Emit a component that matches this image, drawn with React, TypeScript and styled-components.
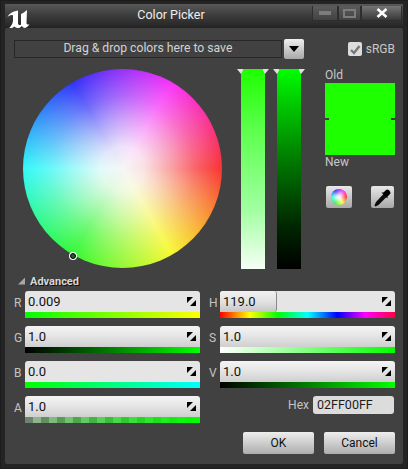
import React from 'react';
import styled, { createGlobalStyle } from 'styled-components';

const GlobalStyle = createGlobalStyle`
  html, body {
    margin: 0;
    padding: 0;
    background: #262626;
  }
  * {
    box-sizing: border-box;
  }
`;

const FONT = `"Roboto", "Liberation Sans", sans-serif`;

const WHEEL_FILL = `
  radial-gradient(
    circle closest-side,
    #f6f6f6 0%,
    rgba(250, 250, 250, 0.9) 22%,
    rgba(250, 250, 250, 0.66) 48%,
    rgba(250, 250, 250, 0.42) 72%,
    rgba(250, 250, 250, 0.2) 100%
  ),
  conic-gradient(from 90deg, #f80000, #f8f800, #00f800, #00f8f8, #0000f8, #f800f8, #f80000)
`;

const Window = styled.div`
  width: 408px;
  height: 469px;
  display: flex;
  flex-direction: column;
  background: #242424;
  border: 1px solid #1c1c1c;
  font-family: ${FONT};
  color: #d6d6d6;
  overflow: hidden;
`;

const TitleBar = styled.div`
  height: 24px;
  flex: none;
  display: flex;
  margin: 3px 4px 0 4px;
  padding: 2px 1px 0 2px;
  background: linear-gradient(#585858, #3e3e3e 45%, #232323);
`;

const Title = styled.div`
  flex: 1;
  padding-top: 1px;
  text-align: center;
  font-size: 12.5px;
  line-height: 16px;
  color: #eeeeee;
`;

const WindowButtons = styled.div`
  display: flex;
  align-items: flex-start;
`;

const WindowButton = styled.div<{ $w: number; $bright?: boolean }>`
  width: ${(p) => p.$w}px;
  height: 15px;
  display: flex;
  align-items: center;
  justify-content: center;
  border: 1px solid #2e2e2e;
  border-top: none;
  border-radius: 0 0 2px 2px;
  background: ${(p) =>
    p.$bright
      ? 'linear-gradient(#757575, #383838)'
      : 'linear-gradient(#5c5c5c, #424242)'};
`;

const Panel = styled.div`
  flex: 1;
  margin: 0 4px 4px 4px;
  background: #414141;
  border-radius: 2px;
  padding: 12px 8px 0 8px;
  display: flex;
  flex-direction: column;
`;

const SaveRow = styled.div`
  display: flex;
  align-items: center;
  height: 18px;
`;

const DropZone = styled.div`
  width: 268px;
  height: 18px;
  margin-left: 1px;
  border: 1px solid #272727;
  text-align: center;
  font-size: 12.2px;
  line-height: 15px;
  color: #d2d2d2;
`;

const DropButton = styled.div`
  width: 20px;
  height: 20px;
  margin-left: 2px;
  display: flex;
  align-items: center;
  justify-content: center;
  border-radius: 2px;
  background: linear-gradient(#f0f0f0, #a8a8a8);
`;

const Check = styled.div`
  width: 14px;
  height: 14px;
  margin-left: 44px;
  display: flex;
  align-items: center;
  justify-content: center;
  border-radius: 2px;
  background: #dddddd;
`;

const CheckLabel = styled.span`
  margin-left: 4px;
  font-size: 12px;
  color: #c8c8c8;
`;

const PickerRow = styled.div`
  display: flex;
  margin-top: 11px;
  height: 200px;
`;

const Wheel = styled.div`
  position: relative;
  width: 199px;
  height: 199px;
  margin-left: 10px;
  flex: none;
  border-radius: 50%;
  background: ${WHEEL_FILL};
`;

const WheelMarker = styled.div`
  position: absolute;
  left: 47px;
  top: 184px;
  width: 6px;
  height: 6px;
  border-radius: 50%;
  background: #1a5f2a;
  border: 1px solid #000000;
  box-shadow: 0 0 0 1px #ffffff;
`;

const Strips = styled.div`
  display: flex;
  gap: 12px;
  margin-left: 19px;
  flex: none;
`;

const Strip = styled.div<{ $fill: string }>`
  position: relative;
  width: 24px;
  height: 200px;
  background: ${(p) => p.$fill};
  &::before,
  &::after {
    content: '';
    position: absolute;
    top: 0;
    width: 6px;
    height: 5px;
    background: #e0e0e0;
  }
  &::before {
    left: -4px;
    clip-path: polygon(0 0, 100% 0, 100% 30%, 66% 100%);
  }
  &::after {
    right: -4px;
    clip-path: polygon(0 0, 100% 0, 33% 100%, 0 30%);
  }
`;

const Preview = styled.div`
  margin-left: 24px;
  width: 72px;
  display: flex;
  flex-direction: column;
  font-size: 12px;
  color: #c8c8c8;
`;

const PreviewLabel = styled.div`
  line-height: 14px;
`;

const OldLabel = styled(PreviewLabel)`
  margin: -1px 0 1px;
`;

const Swatch = styled.div`
  position: relative;
  width: 70px;
  height: 72px;
  background: #1eff00;
  &::before,
  &::after {
    content: '';
    position: absolute;
    top: 35px;
    width: 4px;
    height: 2px;
    background: #3d3d3d;
  }
  &::before {
    left: 0;
  }
  &::after {
    right: 0;
  }
`;

const ToolRow = styled.div`
  display: flex;
  gap: 19px;
  margin-top: 17px;
  margin-left: 1px;
`;

const ToolButton = styled.div<{ $w: number }>`
  width: ${(p) => p.$w}px;
  height: 22px;
  flex: none;
  display: flex;
  align-items: center;
  justify-content: center;
  border-radius: 2px;
  background: linear-gradient(#e8e8e8, #a8a8a8);
`;

const MiniWheel = styled.div`
  width: 16px;
  height: 16px;
  border-radius: 50%;
  background: ${WHEEL_FILL};
`;

const AdvancedHeader = styled.div`
  display: flex;
  align-items: center;
  gap: 5px;
  margin-top: 5px;
  margin-left: 5px;
  height: 14px;
  font-size: 11px;
  font-weight: 700;
  color: #d8d8d8;
  text-shadow: 1px 1px 0 #111111;
`;

const Triangle = styled.div`
  width: 7px;
  height: 7px;
  background: #a8a8a8;
  clip-path: polygon(100% 0, 100% 100%, 0 100%);
`;

const SliderGrid = styled.div`
  display: grid;
  grid-template-columns: 187px 187px;
  column-gap: 8px;
  margin-top: 3px;
`;

const SliderColumn = styled.div`
  display: flex;
  flex-direction: column;
  gap: 8px;
`;

const SliderRow = styled.div`
  display: flex;
  height: 27px;
`;

const AxisLabel = styled.div`
  width: 12px;
  flex: none;
  padding-left: 1px;
  font-size: 12px;
  line-height: 24px;
  color: #c4c4c4;
`;

const SliderBody = styled.div`
  flex: 1;
  display: flex;
  flex-direction: column;
`;

const NumberField = styled.div<{ $flat?: boolean }>`
  position: relative;
  height: 21px;
  padding-left: 3px;
  font-size: 13px;
  line-height: 21px;
  color: #111111;
  border-radius: 3px 3px 0 0;
  background: ${(p) =>
    p.$flat ? '#e5e5e5' : 'linear-gradient(#f4f4f4, #e6e6e6 45%, #cfcfcf)'};
  overflow: hidden;
`;

const HueFill = styled.div<{ $w: number }>`
  position: absolute;
  left: 0;
  top: 0;
  bottom: 0;
  width: ${(p) => p.$w}px;
  background: linear-gradient(#f2f2f2, #e2e2e2 50%, #c6c6c6);
  border-right: 1px solid #8a8a8a;
  border-radius: 0 3px 3px 0;
`;

const FieldText = styled.span`
  position: relative;
`;

const Grip = styled.svg`
  position: absolute;
  right: 4px;
  top: 6px;
  width: 9px;
  height: 9px;
`;

const ColorBar = styled.div<{ $fill: string }>`
  height: 6px;
  background: ${(p) => p.$fill};
`;

const HexRow = styled.div`
  display: flex;
  align-items: center;
  justify-content: flex-end;
  gap: 4px;
  padding-right: 1px;
  height: 18px;
  font-size: 12px;
  color: #c4c4c4;
`;

const HexField = styled.div`
  width: 81px;
  height: 18px;
  padding-left: 4px;
  font-size: 12.5px;
  line-height: 18px;
  color: #1c1c1c;
  border-radius: 3px;
  background: #dcdcdc;
`;

const Footer = styled.div`
  display: flex;
  justify-content: flex-end;
  gap: 10px;
  margin-top: 9px;
`;

const DialogButton = styled.div`
  width: 71px;
  height: 22px;
  text-align: center;
  font-size: 12px;
  line-height: 23px;
  color: #111111;
  border-radius: 2px;
  background: linear-gradient(#eeeeee, #adadad);
`;

const GripIcon = () => (
  <Grip viewBox="0 0 9 9">
    <path d="M0 0H6L0 6Z" fill="#000" />
    <path d="M9 9H3L9 3Z" fill="#000" />
  </Grip>
);

const UnrealLogo = () => (
  <svg width="23" height="20" viewBox="6 8 23 20" style={{ marginTop: 3 }}>
    <path
      d="M6.5 16 C8 13 11 10.5 17 9.5 L17 22 C17 23.8 18.5 24.5 20 23.8 L20 13 C22 12 24.5 10.5 26 9 L25.5 21.5 C25.5 23.5 26.5 24 28.5 23.3 C27 25.5 25.5 26.8 24 27 C22.5 27 21.5 26.2 21 25 C19.5 26.5 18 27.3 16.5 27 C15 26.8 14 26.2 13.2 25.5 C12 27 9.5 27.8 7 28 C9.5 26 11.5 23.5 12 20 L12 15 C12 13.5 9.5 13.8 6.5 16 Z"
      fill="#ffffff"
    />
  </svg>
);

const Dropper = () => (
  <svg width="20" height="21" viewBox="0 0 20 21">
    <path d="M10.5 7 L13.5 10 L5.5 18 L2.5 19.5 L1.5 18.5 L3 15 Z" fill="#0c0c0c" />
    <path d="M8.5 5.5 L10.5 5.5 L13 3 C14.5 0.8 19 5 17 7 L14.5 9.5 L14.5 11.5 Z" fill="#000" />
  </svg>
);

const leftSliders = [
  { label: 'R', value: '0.009', flat: true, fill: 'linear-gradient(90deg, #00ff00, #ffff00)' },
  { label: 'G', value: '1.0', fill: 'linear-gradient(90deg, #000000, #02ff00)' },
  { label: 'B', value: '0.0', flat: true, fill: 'linear-gradient(90deg, #00ff00, #00ffff)' },
  {
    label: 'A',
    value: '1.0',
    fill: `linear-gradient(90deg, rgba(0, 255, 0, 0.08), #00ff00),
      repeating-linear-gradient(90deg, #777777 0 8px, #a6a6a6 8px 16px)`,
  },
];

const rightSliders = [
  {
    label: 'H',
    value: '119.0',
    hue: 57,
    flat: true,
    fill: 'linear-gradient(90deg, #ff0000, #ffff00 17%, #00ff00 33%, #00ffff 50%, #0000ff 67%, #ff00ff 83%, #ff0040)',
  },
  { label: 'S', value: '1.0', fill: 'linear-gradient(90deg, #ffffff, #02ff00)' },
  { label: 'V', value: '1.0', fill: 'linear-gradient(90deg, #000000, #02ff00)' },
];

type SliderProps = { label: string; value: string; fill: string; hue?: number; flat?: boolean };

const Slider = ({ label, value, fill, hue, flat }: SliderProps) => (
  <SliderRow>
    <AxisLabel>{label}</AxisLabel>
    <SliderBody>
      <NumberField $flat={flat}>
        {hue !== undefined && <HueFill $w={hue} />}
        <FieldText>{value}</FieldText>
        <GripIcon />
      </NumberField>
      <ColorBar $fill={fill} />
    </SliderBody>
  </SliderRow>
);

export default function App() {
  return (
    <>
      <GlobalStyle />
      <Window>
        <TitleBar>
          <UnrealLogo />
          <Title>Color Picker</Title>
          <WindowButtons>
            <WindowButton $w={26}>
              <svg width="12" height="4"><rect width="12" height="4" fill="#7c7c7c" /></svg>
            </WindowButton>
            <WindowButton $w={23}>
              <svg width="13" height="9">
                <rect x="1" y="1" width="11" height="7" fill="none" stroke="#7c7c7c" strokeWidth="2" />
              </svg>
            </WindowButton>
            <WindowButton $w={41} $bright>
              <svg width="12" height="10" viewBox="0 0 12 10">
                <path d="M1.5 1 L10.5 9 M10.5 1 L1.5 9" stroke="#fff" strokeWidth="2.6" />
              </svg>
            </WindowButton>
          </WindowButtons>
        </TitleBar>
        <Panel>
          <SaveRow>
            <DropZone>Drag &amp; drop colors here to save</DropZone>
            <DropButton>
              <svg width="10" height="7" viewBox="0 0 10 7">
                <path d="M0 0H10L5 6Z" fill="#000" />
              </svg>
            </DropButton>
            <Check>
              <svg width="12" height="11" viewBox="0 0 12 11">
                <path d="M2 6 L5 9 L10.5 2" fill="none" stroke="#777" strokeWidth="2.4" />
              </svg>
            </Check>
            <CheckLabel>sRGB</CheckLabel>
          </SaveRow>
          <PickerRow>
            <Wheel>
              <WheelMarker />
            </Wheel>
            <Strips>
              <Strip $fill="linear-gradient(#1eff00, #5cff4c 30%, #a0ffa0 70%, #f6fff6)" />
              <Strip $fill="linear-gradient(#00ff00, #00d000 15%, #007c00 45%, #002800 78%, #000000)" />
            </Strips>
            <Preview>
              <OldLabel>Old</OldLabel>
              <Swatch />
              <PreviewLabel>New</PreviewLabel>
              <ToolRow>
                <ToolButton $w={26}>
                  <MiniWheel />
                </ToolButton>
                <ToolButton $w={23}>
                  <Dropper />
                </ToolButton>
              </ToolRow>
            </Preview>
          </PickerRow>
          <AdvancedHeader>
            <Triangle />
            Advanced
          </AdvancedHeader>
          <SliderGrid>
            <SliderColumn>
              {leftSliders.map((s) => (
                <Slider key={s.label} {...s} />
              ))}
            </SliderColumn>
            <SliderColumn>
              {rightSliders.map((s) => (
                <Slider key={s.label} {...s} />
              ))}
              <HexRow>
                Hex
                <HexField>02FF00FF</HexField>
              </HexRow>
            </SliderColumn>
          </SliderGrid>
          <Footer>
            <DialogButton>OK</DialogButton>
            <DialogButton>Cancel</DialogButton>
          </Footer>
        </Panel>
      </Window>
    </>
  );
}
